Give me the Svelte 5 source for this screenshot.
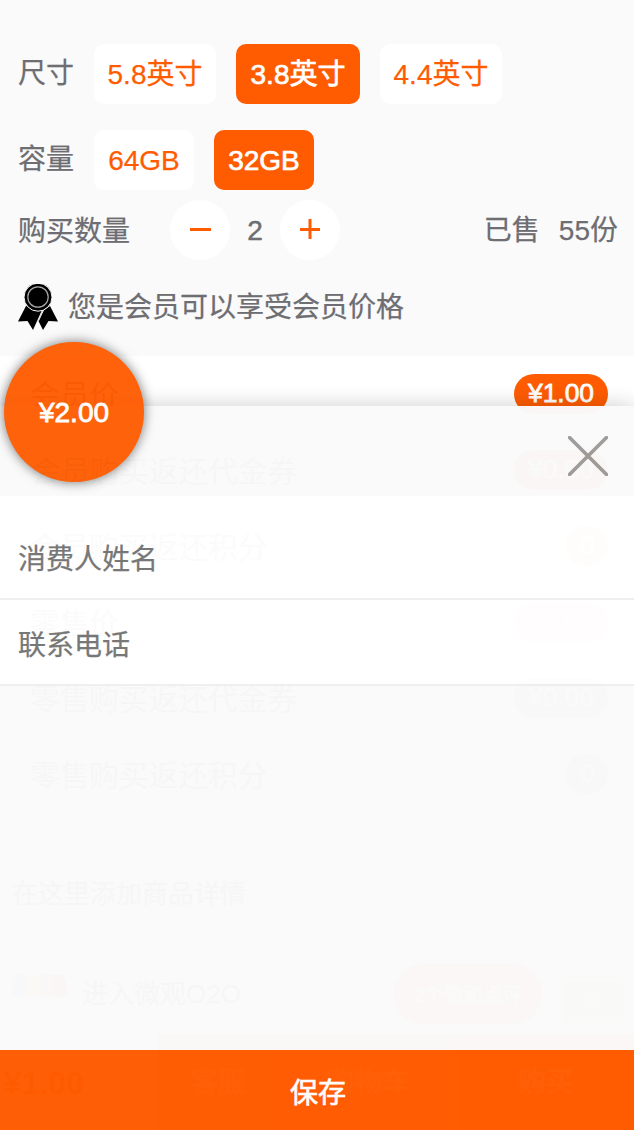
<script>
  let sizes = ['5.8英寸', '3.8英寸', '4.4英寸'];
  let capacities = ['64GB', '32GB'];
  let size = $state('3.8英寸');
  let capacity = $state('32GB');
  let count = $state(2);
  const prices = [
    { label: '会员价', value: '¥1.00' },
    { label: '会员购买返还代金券', value: '¥0.00' },
    { label: '会员购买返还积分', value: '0', pale: true },
    { label: '零售价', value: '¥2.00', retail: true, pale: true },
    { label: '零售购买返还代金券', value: '¥0.00', retail: true },
    { label: '零售购买返还积分', value: '0', retail: true }
  ];
</script>

<div class="screen">
  <section class="options">
    <div class="row">
      <span class="label">尺寸</span>
      {#each sizes as s}
        <button class="chip wide" class:on={size === s} onclick={() => (size = s)}>{s}</button>
      {/each}
    </div>
    <div class="row second">
      <span class="label">容量</span>
      {#each capacities as c}
        <button class="chip" class:on={capacity === c} onclick={() => (capacity = c)}>{c}</button>
      {/each}
    </div>
    <div class="row quantity">
      <span class="qlabel">购买数量</span>
      <button class="round" aria-label="-" onclick={() => (count = Math.max(1, count - 1))}>
        <svg width="60" height="60"><path d="M20 29.5H41" /></svg>
      </button>
      <span class="count">{count}</span>
      <button class="round" aria-label="+" onclick={() => count++}>
        <svg width="60" height="60"><path d="M20 29.5H40M30 19V39" /></svg>
      </button>
      <span class="sold"><span>已售</span><span>55份</span></span>
    </div>
    <div class="member">
      <svg width="40" height="46" viewBox="0 0 40 46">
        <path d="M8 22L0 37.5l9.5-.5 5.5 9L24 26zM32 22l8 15.5-9.5-.5-5.5 9-4.5-9L26 26z" fill="#000" />
        <path d="M25 26.5l-4.5 10" stroke="#ddd" stroke-width="1.2" />
        <circle cx="20" cy="13.2" r="14" fill="#000" stroke="#fafafa" stroke-width="1" />
        <circle cx="20" cy="13" r="10.2" fill="none" stroke="#aaa" stroke-width="1.2" />
      </svg>
      <span>您是会员可以享受会员价格</span>
    </div>
  </section>

  <section class="prices">
    {#each prices as p}
      <div class="price">
        <span>{p.label}</span>
        <b class:retail={p.retail} class:pale={p.pale} class:zero={p.value === '0'}>{p.value}</b>
      </div>
    {/each}
  </section>
  <p class="detail">在这里添加商品详情</p>
  <div class="shop">
    <svg class="awning" width="56" height="22" viewBox="0 0 56 22">
      <path d="M5 0h9v20q-2 2-5 2-9 0-9-8z" fill="#60b0ff" />
      <path d="M14 0h14v20q-7 4-14 0z" fill="#ffe040" />
      <path d="M28 0h14v20q-7 4-14 0z" fill="#f0c040" />
      <path d="M42 0h9l5 14q0 8-8 8-4 0-6-2z" fill="#ff5050" />
    </svg>
    <span class="enter">进入微观O2O</span>
    <span class="reviews">2个赞和点评</span>
    <span class="stack">0</span>
  </div>
  <div class="bottom">
    <span class="total">¥1.00</span>
    <span class="service">客服</span>
    <span class="cart">购物车</span>
    <span class="buy">购买</span>
  </div>

  <section class="sheet">
    <header>
      <svg width="40" height="40"><path d="M1.5 1.5L38.5 38.5M38.5 1.5L1.5 38.5" /></svg>
    </header>
    <label class="field name"><input placeholder="消费人姓名" /></label>
    <label class="field"><input placeholder="联系电话" /></label>
    <div class="blank"></div>
    <button class="save">保存</button>
  </section>

  <div class="bubble">
    <span class="trace" aria-hidden="true">会员购</span>
    ¥2.00
  </div>
</div>

<style>
  :global(body) { margin: 0; overflow: hidden; }
  .screen, .screen * { box-sizing: border-box; }
  .screen {
    position: relative; width: 634px; height: 1130px; overflow: hidden;
    background: #fafafa; color: #6d6d72;
    font: 28px/40px "Liberation Sans", "Noto Sans CJK SC", sans-serif;
    -webkit-text-stroke: .25px currentColor;
  }
  button { border: 0; padding: 0; margin: 0; font: inherit; -webkit-text-stroke: inherit; }
  .options { height: 356px; padding: 44px 16px 0 18px; }
  .row { display: flex; align-items: center; height: 60px; }
  .second { margin-top: 26px; }
  .quantity { margin-top: 10px; }
  .label { width: 76px; padding-bottom: 0; }
  .chip {
    width: 100px; height: 60px; margin-right: 20px; border-radius: 10px; padding-top: 2px;
    background: #fff; color: #ff5c02; line-height: 58px; text-align: center; white-space: nowrap;
  }
  .wide { width: 122px; }
  .wide.on { width: 124px; }
  .chip.on { background: #ff5c02; color: #fff; -webkit-text-stroke: .7px #fff; }
  .qlabel { width: 152px; padding-top: 4px; }
  .round { width: 60px; height: 60px; border-radius: 50%; background: #fff; }
  .round svg { display: block; }
  .round path { stroke: #ff5c02; stroke-width: 3; }
  .count { width: 50px; padding-top: 1px; text-align: center; -webkit-text-stroke: .5px #6d6d72; }
  .sold { margin-left: auto; padding-top: 2px; display: flex; gap: 19px; }
  .member { display: flex; align-items: center; gap: 10px; height: 46px; margin-top: 24px; }
  .member span { padding-top: 2px; }
  .prices { background: #fff; height: 456px; }
  .price {
    height: 76px; padding: 0 26px 0 30px; display: flex;
    align-items: center; justify-content: space-between; color: #555; font-size: 29.7px;
    -webkit-text-stroke: 0;
  }
  .price > span { padding-top: 3px; }
  .price b {
    height: 40px; padding: 0 14px; border-radius: 20px; background: #ff5c02; color: #fff;
    font-size: 26.4px; font-weight: 400; line-height: 38px; -webkit-text-stroke: .8px #fff;
  }
  .price b.zero { width: 42px; text-align: center; }
  .price b.retail { background: #f89cac; }
  .price b.pale { background: #ffa060; }
  .price b.pale.retail { background: #ffb4c4; }
  .detail { margin: 61px 0 0 12px; padding-top: 1px; height: 40px; font-size: 26px; color: #444; }
  .shop { display: flex; align-items: center; margin-top: 51px; height: 60px; padding: 0 10px 0 12px; font-size: 26px; color: #444; }
  .awning { margin-bottom: 16px; }
  .enter { margin-left: 14px; }
  .reviews {
    margin-left: auto; width: 148px; height: 60px; border-radius: 30px; background: #ff8c50;
    color: #fff; font-size: 19.5px; line-height: 63px; text-align: center; font-weight: 700;
  }
  .stack {
    margin: 16px 0 0 24px; width: 58px; height: 42px; background: #d8cfa0; color: #fff;
    text-align: center; box-shadow: 0 -4px 0 -2px #fff, 0 -6px 0 -1px #d8cfa0; font-size: 22px;
  }
  .bottom { display: grid; grid-template-columns: 158px 120px 180px 176px; margin-top: 10px; height: 96px; line-height: 98px; color: #fff; text-align: center; font-weight: 700; }
  .total { color: #e04000; font-size: 32px; text-align: left; padding-left: 4px; }
  .service { background: #dc9968; }
  .cart { background: #ff7c80; }
  .buy { background: #ff7430; }

  .sheet {
    position: absolute; left: 0; right: 0; bottom: 0; height: 724px;
    display: flex; flex-direction: column; opacity: .98;
    box-shadow: 0 0 20px rgba(0, 0, 0, .2);
  }
  header { height: 90px; padding: 30px 26px 0 0; display: flex; justify-content: flex-end; background: #fafafa; }
  header path { stroke: #9e9b99; stroke-width: 3.6; stroke-linecap: round; }
  .field { display: flex; align-items: center; height: 86px; padding: 8px 18px 0 18px; background: #fff; border-bottom: 2px solid #efefef; }
  .name { height: 104px; padding-top: 26px; }
  input { width: 100%; height: 44px; border: 0; padding: 0; outline: 0; background: transparent; font: inherit; color: #6d6d72; }
  input::placeholder { color: #757575; opacity: 1; -webkit-text-stroke: .25px #757575; }
  .blank { flex: 1; background: #fafafa; }
  .save { height: 80px; padding: 7px 0 0 2px; background: #ff5c02; color: #fff; -webkit-text-stroke: .7px #fff; }

  .bubble {
    position: absolute; left: 4px; top: 342px; width: 140px; height: 140px;
    border-radius: 50%; overflow: hidden; background: #ff5c02; opacity: .96; color: #fff;
    line-height: 141px; text-align: center; -webkit-text-stroke: .8px #fff;
    box-shadow: 0 0 12px rgba(0, 0, 0, .55);
  }
  .trace {
    position: absolute; left: 27px; top: 110px; color: rgba(60, 20, 0, .05);
    font-size: 29.5px; line-height: 40px; -webkit-text-stroke: 0; white-space: nowrap;
  }
</style>
